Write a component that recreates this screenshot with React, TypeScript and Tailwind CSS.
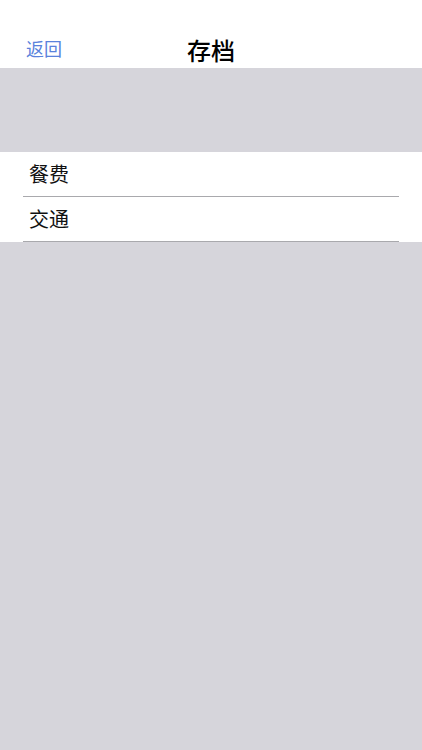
import React from "react"

const items = ["餐费", "交通"]

export default function App() {
  return (
    <div
      className="min-h-[750px] w-full bg-[#d6d5db]"
      style={{ fontFamily: '"Noto Sans CJK SC", "Noto Sans", sans-serif' }}
    >
      {/* Nav bar */}
      <div className="relative flex h-[68px] items-end justify-center bg-white pb-[1px]">
        <span className="absolute left-[26px] top-[36px] text-[18px] leading-[24px] text-[#5a82dc]">返回</span>
        <span className="text-[24px] font-medium leading-[34px] text-black">存档</span>
      </div>

      {/* Group spacer */}
      <div className="h-[84px]" />

      {/* List */}
      <div className="bg-white">
        {items.map((item) => (
          <div key={item} className="ml-[23px] mr-[23px] flex h-[45px] items-center border-b border-[#a9a9ad] pl-[6px]">
            <span className="text-[20px] leading-[28px] text-[#111]">{item}</span>
          </div>
        ))}
      </div>
    </div>
  )
}
